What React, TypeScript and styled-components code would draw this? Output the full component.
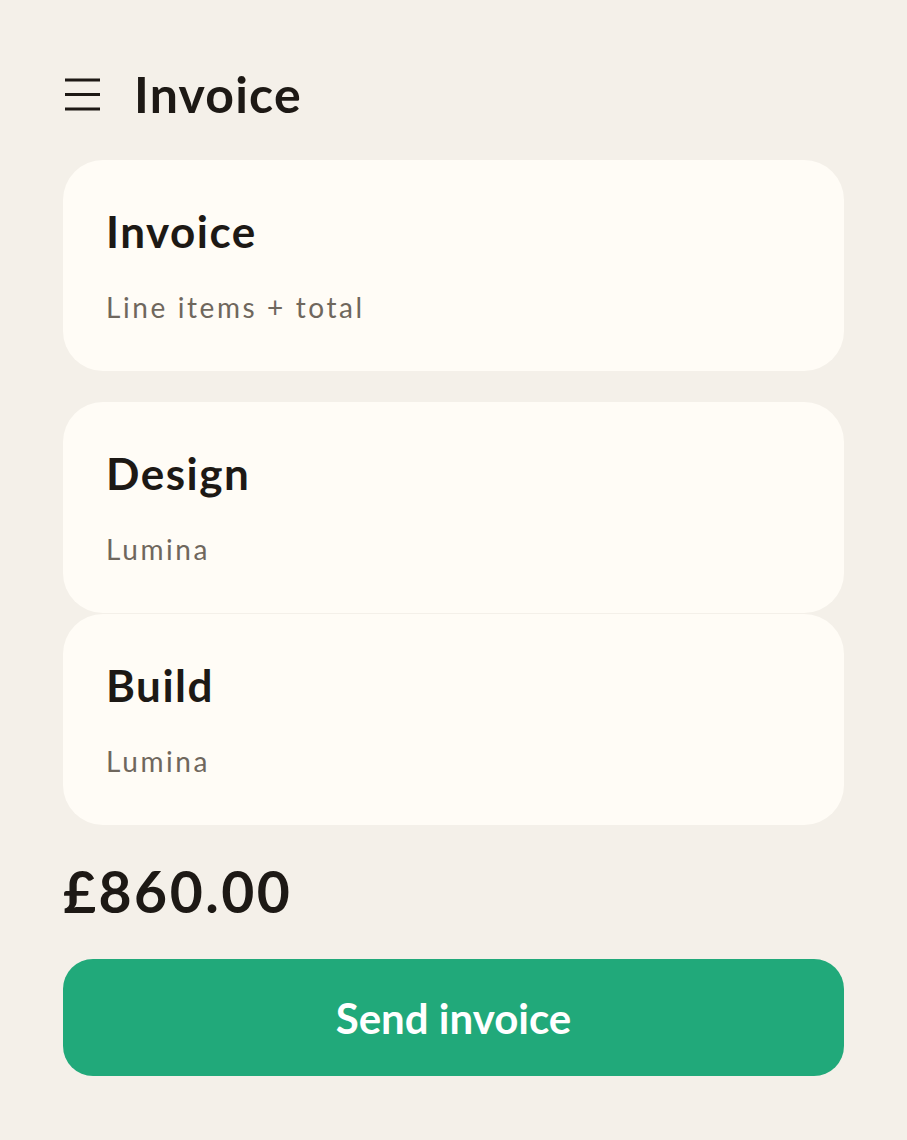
import React from 'react';
import styled, { createGlobalStyle } from 'styled-components';

const GlobalStyle = createGlobalStyle`
  html, body {
    margin: 0;
    padding: 0;
    background: #f4f0e9;
  }
  * {
    box-sizing: border-box;
  }
`;

const S = {
  Page: styled.div`
    width: 907px;
    min-height: 1140px;
    padding: 64px 63px 0;
    font-family: Lato, 'Noto Sans', sans-serif;
    color: #1d1915;
    display: flex;
    flex-direction: column;
  `,
  Header: styled.div`
    display: flex;
    align-items: center;
    gap: 34px;
    height: 60px;
  `,
  MenuButton: styled.button`
    border: none;
    background: none;
    padding: 0;
    margin-left: 2px;
    width: 35px;
    height: 33px;
    display: flex;
    cursor: pointer;
  `,
  Title: styled.h1`
    margin: 0;
    font-size: 50px;
    font-weight: 700;
    line-height: 1.2;
    letter-spacing: 1.2px;
  `,
  Cards: styled.div`
    margin-top: 36px;
    display: flex;
    flex-direction: column;
    gap: 31px;
  `,
  Items: styled.div`
    display: flex;
    flex-direction: column;
    gap: 1px;
  `,
  Card: styled.div`
    background: #fffcf6;
    border-radius: 40px;
    padding: 45px 43px 0;
    height: 211px;
  `,
  CardTitle: styled.div`
    font-size: 44px;
    font-weight: 700;
    line-height: 1.2;
    letter-spacing: 1.5px;
  `,
  CardSub: styled.div`
    margin-top: 33px;
    font-size: 28px;
    font-weight: 400;
    line-height: 1.2;
    letter-spacing: 2.6px;
    color: #6f675d;
  `,
  Total: styled.div`
    margin-top: 32px;
    font-size: 57px;
    font-weight: 700;
    line-height: 1.2;
    letter-spacing: 2.5px;
  `,
  SendButton: styled.button`
    margin-top: 34px;
    height: 117px;
    width: 100%;
    border: none;
    border-radius: 30px;
    background: #21a97a;
    color: #ffffff;
    font-family: Lato, 'Noto Sans', sans-serif;
    font-size: 42px;
    font-weight: 700;
    cursor: pointer;
  `,
};

const items = [
  { title: 'Design', sub: 'Lumina' },
  { title: 'Build', sub: 'Lumina' },
];

function MenuIcon() {
  return (
    <svg width="35" height="33" viewBox="0 0 35 33" fill="none">
      <path d="M0 2h35M0 16.5h35M0 31h35" stroke="#1d1915" strokeWidth="3" />
    </svg>
  );
}

export default function App() {
  return (
    <S.Page>
      <GlobalStyle />
      <S.Header>
        <S.MenuButton aria-label="Menu">
          <MenuIcon />
        </S.MenuButton>
        <S.Title>Invoice</S.Title>
      </S.Header>
      <S.Cards>
        <S.Card>
          <S.CardTitle>Invoice</S.CardTitle>
          <S.CardSub>Line items + total</S.CardSub>
        </S.Card>
        <S.Items>
          {items.map((it) => (
            <S.Card key={it.title}>
              <S.CardTitle>{it.title}</S.CardTitle>
              <S.CardSub>{it.sub}</S.CardSub>
            </S.Card>
          ))}
        </S.Items>
      </S.Cards>
      <S.Total>£860.00</S.Total>
      <S.SendButton>Send invoice</S.SendButton>
    </S.Page>
  );
}
